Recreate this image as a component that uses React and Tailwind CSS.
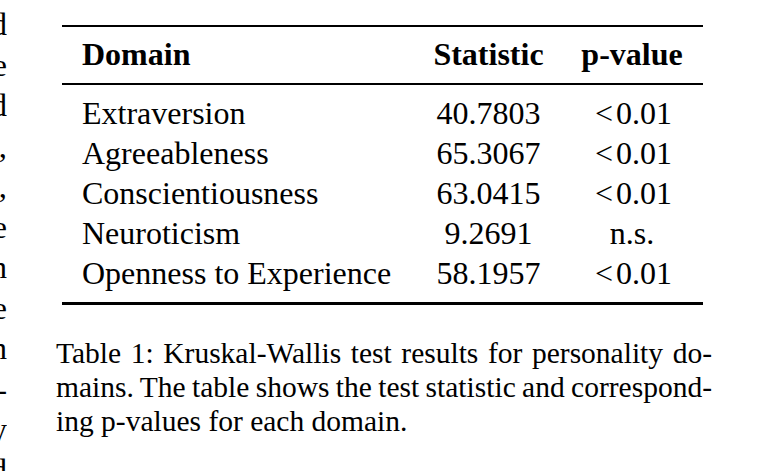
import React from 'react'

const edgeWords = ['and', 'the', 'and', 'tests,', 'values,', 'the', 'in', 'are', 'on', 'non-', 'by', 'and']

const rows = [
  { domain: 'Extraversion', stat: '40.7803', p: 'lt' },
  { domain: 'Agreeableness', stat: '65.3067', p: 'lt' },
  { domain: 'Conscientiousness', stat: '63.0415', p: 'lt' },
  { domain: 'Neuroticism', stat: '9.2691', p: 'n.s.' },
  { domain: 'Openness to Experience', stat: '58.1957', p: 'lt' },
]

function PValue({ p }) {
  if (p !== 'lt') return <span>{p}</span>
  return (
    <span>
      <span className="inline-block px-[3px]">&lt;</span>0.01
    </span>
  )
}

function App() {
  return (
    <div className="w-[774px] h-[471px] overflow-hidden bg-white text-black flex font-['Liberation_Serif','Times_New_Roman',serif]">
      {/* clipped edge of the neighbouring text column */}
      <div className="w-[7px] shrink-0 overflow-hidden pt-[4px] text-[32.6px] leading-[40.5px] flex flex-col">
        {edgeWords.map((w, i) => (
          <div key={i} className="flex justify-end">
            <span className="whitespace-nowrap">{w}</span>
          </div>
        ))}
      </div>

      <div className="ml-[49px] w-[656px] shrink-0 pt-[25px]">
        <div className="ml-[6px] w-[641px] text-[32px]">
          <div className="h-[2.4px] bg-black" />
          <div className="grid grid-cols-[354px_145px_142px] pt-[7px] pb-[9px] leading-[40px] font-bold">
            <div className="pl-[20px]">Domain</div>
            <div className="text-center">Statistic</div>
            <div className="text-center">p-value</div>
          </div>
          <div className="h-[1.5px] bg-black" />
          <div className="pt-[8.5px] pb-[9px]">
            {rows.map((r) => (
              <div key={r.domain} className="grid grid-cols-[354px_145px_142px] leading-[40px]">
                <div className="pl-[20px] whitespace-nowrap">{r.domain}</div>
                <div className="text-center">{r.stat}</div>
                <div className="text-center"><PValue p={r.p} /></div>
              </div>
            ))}
          </div>
          <div className="h-[2.4px] bg-black" />
        </div>

        <div className="mt-[31px] text-[29.5px] leading-[34px]">
          <div className="text-justify [text-align-last:justify]">Table 1: Kruskal-Wallis test results for personality do-</div>
          <div className="text-justify [text-align-last:justify] [word-spacing:-2px]">mains. The table shows the test statistic and correspond-</div>
          <div>ing p-values for each domain.</div>
        </div>
      </div>
    </div>
  )
}

export default App
